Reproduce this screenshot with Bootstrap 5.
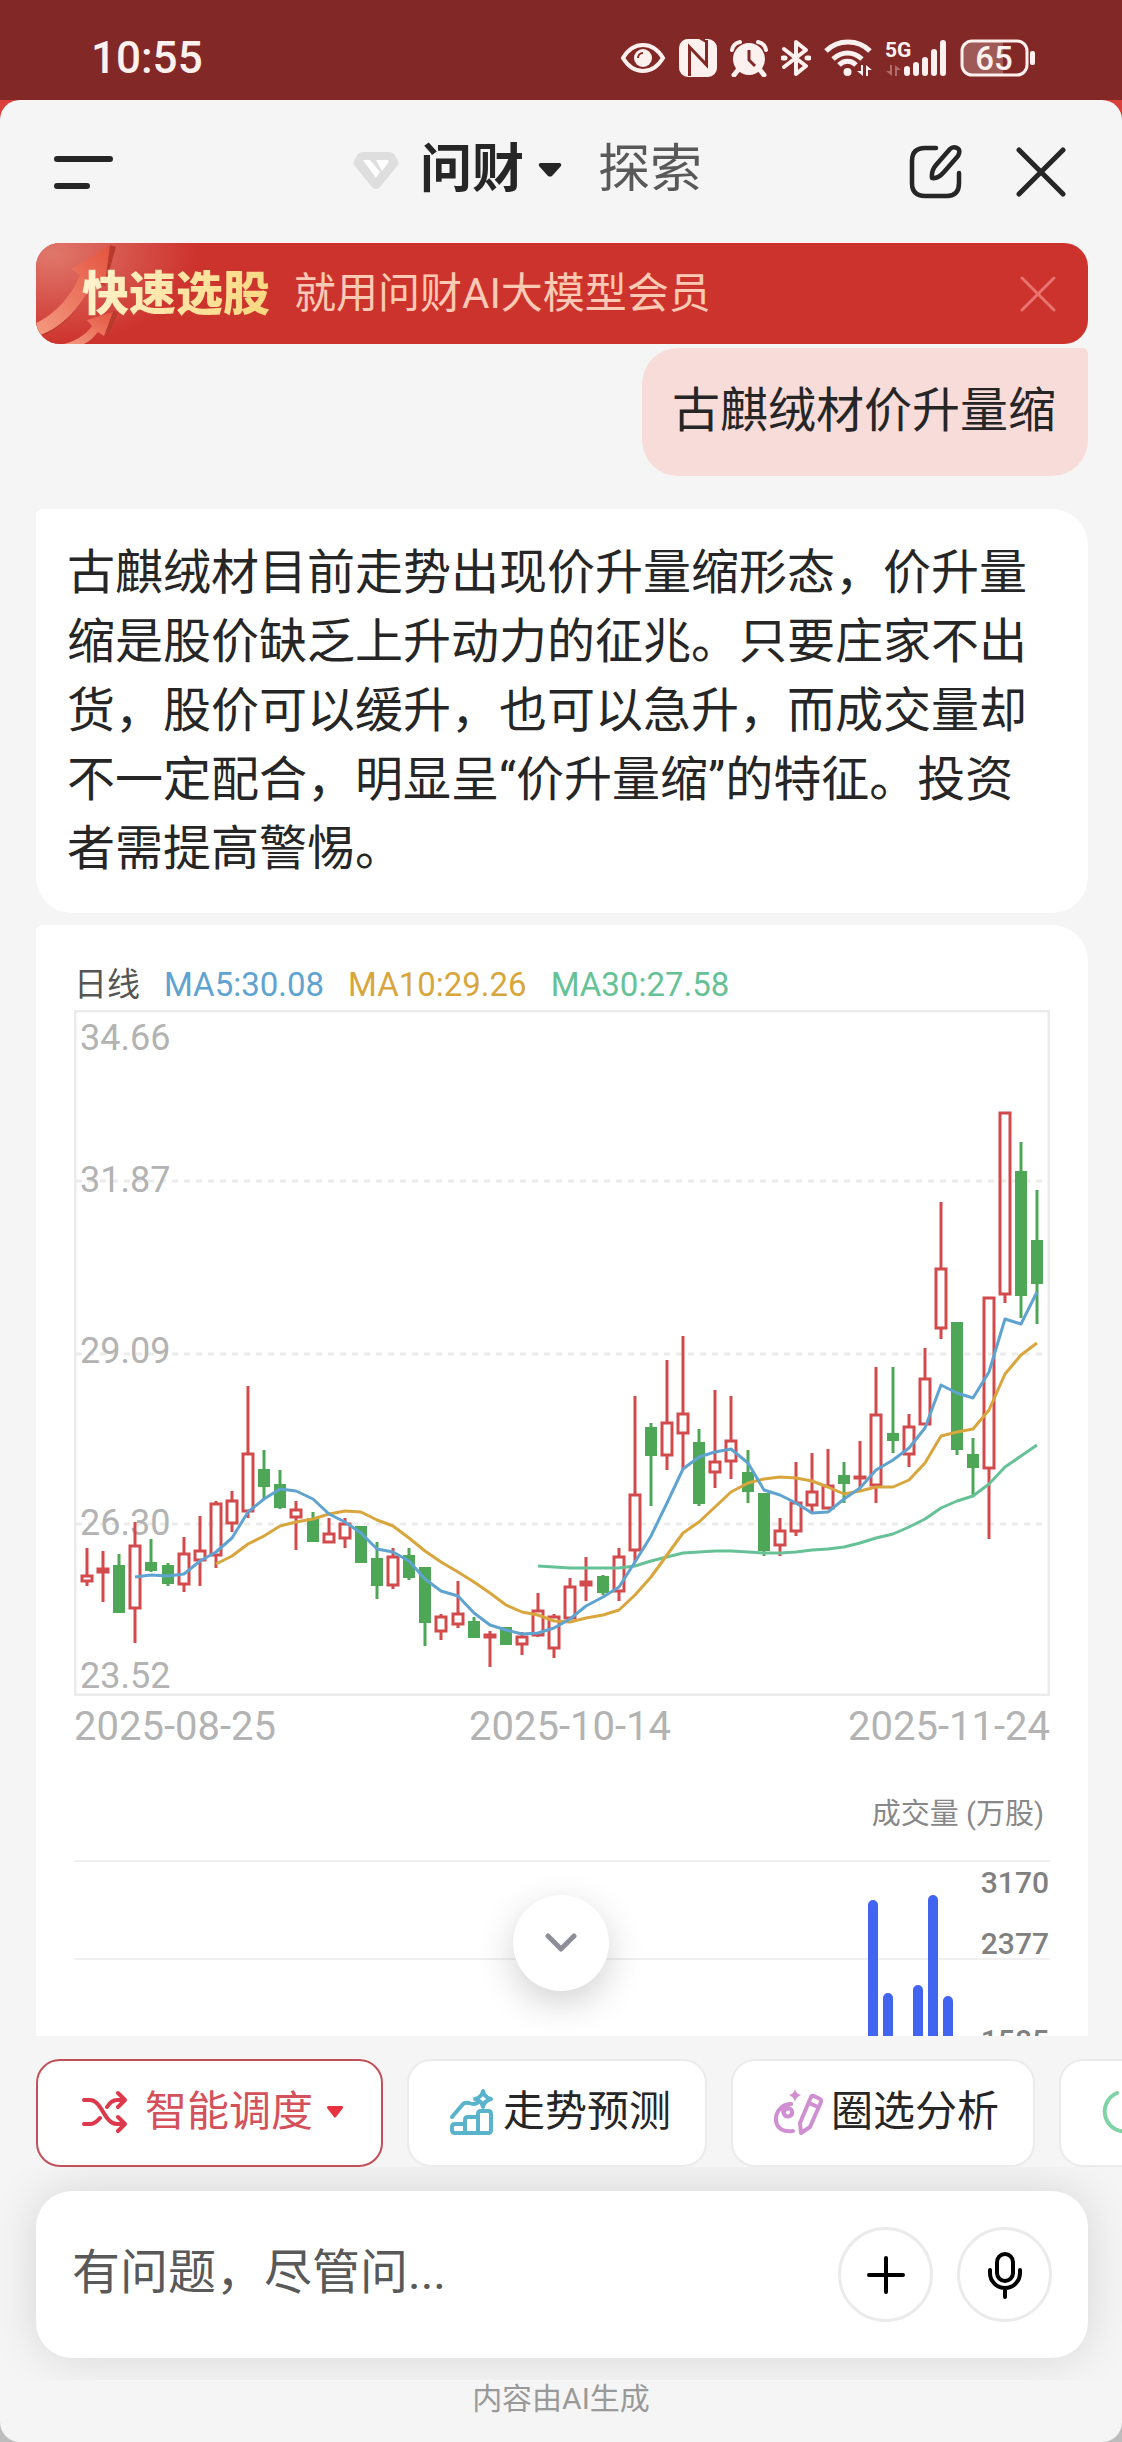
<!DOCTYPE html>
<html lang="zh-CN">
<head>
<meta charset="utf-8">
<meta name="viewport" content="width=device-width, initial-scale=1">
<title>问财</title>
<link href="https://cdn.jsdelivr.net/npm/bootstrap@5.3.0/dist/css/bootstrap.min.css" rel="stylesheet">
<style>
  body { background: #d9403c; font-family: Roboto, "Noto Sans CJK SC", sans-serif; color: #262626; }
  button, input { font-family: inherit; }
  svg { display: block; flex-shrink: 0; }
  .status-bar { height: 100px; padding: 16px 86px 0 91px; background: #822826; color: #fdf1f0; }
  .clock { font-size: 44px; line-height: 48px; font-weight: 500; }
  .status-icons { gap: 13px; }
  .shell { background: linear-gradient(#d9403c 50%, #bdbdbd 50%); min-height: 0; }
  .sheet { background: #f5f5f5; border-radius: 20px; overflow: hidden; }
  .topbar { height: 143px; padding: 0 54px; }
  .tab-bar { margin-left: 32px; padding-bottom: 4px; }
  .icon-btn { border: 0; background: none; padding: 0; color: #262626; }
  .brand-mark { margin-right: 20px; }
  .tab-main, .tab-other { font-size: 52px; line-height: 60px; border: 0; background: none; padding: 0; text-decoration: none; }
  .tab-main { font-weight: 700; color: #262626; gap: 14px; }
  .tab-other { color: #595959; margin-left: 36px; }
  .gutter { margin-left: 36px; margin-right: 34px; }
  .promo { height: 101px; border-radius: 24px; background: #cd332d; overflow: hidden; padding: 0 32px 0 46px; }
  .promo-art { left: 0; top: 0; }
  .promo-title { font-size: 47px; line-height: 56px; font-weight: 900; background: linear-gradient(110deg, #fff3cf, #fbd77c); -webkit-background-clip: text; background-clip: text; color: transparent; }
  .promo-text { font-size: 42px; line-height: 56px; color: #fcc9b4; }
  .say { font-size: 48px; line-height: 69px; }
  .ask { background: #f8dcd9; border-radius: 36px 6px 36px 36px; padding: 28px 32px 31px 30px; margin-top: 4px; }
  .reply { background: #fff; border-radius: 6px 36px 36px 36px; padding: 29px 32px 30px 31px; margin-top: 33px; }
  .chart-card { background: #fff; border-radius: 6px 36px 0 0; padding: 38px 38px 0; margin-top: 12px; }
  .legend-row { font-size: 33px; line-height: 44px; gap: 24px; color: #555; margin-bottom: 3px; }
  .ma5 { color: #5fa3d0; } .ma10 { color: #d8a63c; } .ma30 { color: #66c296; }
  .axis-dates { font-size: 40px; line-height: 48px; color: #b3b3b3; margin-top: 7px; }
  .vol-title { font-size: 29px; line-height: 40px; color: #888; margin: 43px 6px 26px 0; }
  .plot text { fill: #b3b3b3; font-size: 36px; }
  .vol text { fill: #808080; font-size: 30px; }
  .to-bottom { width: 96px; height: 96px; background: #fff; bottom: 45px; left: 50%; transform: translateX(-50%); box-shadow: 0 12px 36px rgba(0,0,0,.18); border: 0; padding: 0; }
  .chips { padding: 23px 0 0 36px; gap: 24px; overflow: hidden; }
  .chip { height: 108px; border-radius: 24px; border: 2px solid #ebebeb; background: #fff; font-size: 42px; line-height: 60px; color: #262626; padding: 0 34px 2px 40px; gap: 8px; flex: none; white-space: nowrap; }
  .chip-main { border-color: #c2505a; color: #d4505a; padding-left: 43px; padding-right: 38px; gap: 18px; }
  .chip-main span { margin-right: -4px; }
  .composer-zone { padding: 24px 34px 22px 36px; overflow: hidden; }
  .composer { height: 167px; border-radius: 36px; background: #fff; padding: 0 36px; gap: 24px; box-shadow: 0 0 48px rgba(0,0,0,.13); }
  .composer input { border: 0; outline: 0; background: none; font-size: 48px; line-height: 64px; min-width: 0; padding: 0; color: #262626; margin-bottom: 4px; }
  .composer input::placeholder { color: #595959; opacity: 1; }
  .round-btn { width: 95px; height: 95px; border: 3px solid #ebebeb; background: #fff; padding: 0; }
  .foot-note { font-size: 30px; line-height: 38px; color: #999; height: 62px; margin: 0; }
  .feed { flex: 1 1 0; min-height: 0; }
</style>
<script src="https://cdn.jsdelivr.net/npm/bootstrap@5.3.0/dist/js/bootstrap.bundle.min.js"></script>
</head>
<body>
<div class="d-flex flex-column vh-100">
  <div class="status-bar d-flex flex-shrink-0 align-items-center justify-content-between">
    <div class="clock">10:55</div>
    <div class="status-icons d-flex align-items-center" aria-hidden="true">
      <svg width="46" height="38" viewBox="0 0 46 38"><path d="M3 19C9 9 16 6 23 6s14 3 20 13c-6 10-13 13-20 13S9 29 3 19z" fill="none" stroke="#fdf1f0" stroke-width="4"/><circle cx="23" cy="19" r="9" fill="#fdf1f0"/><path d="M18 19a5 5 0 0 1 5-5" fill="none" stroke="#822826" stroke-width="2"/></svg>
      <svg width="38" height="38" viewBox="0 0 38 38"><path d="M10 0h10l7 4v19L17 14v24H9a9 9 0 0 1-9-9V9a9 9 0 0 1 10-9z" fill="#fdf1f0"/><path d="M26 0h3a9 9 0 0 1 9 9v20a9 9 0 0 1-9 9H17l-6-4V10l15 15z" fill="#fdf1f0"/><path d="M10.500 37V8l17 18V1" fill="none" stroke="#822826" stroke-width="3"/></svg>
      <svg width="38" height="38" viewBox="0 0 38 38"><circle cx="19" cy="20" r="16" fill="#fdf1f0"/><path d="M8 31l-4 5M30 31l4 5" stroke="#fdf1f0" stroke-width="5" stroke-linecap="round"/><path d="M2 11a10 10 0 0 1 8-8M36 11a10 10 0 0 0-8-8" fill="none" stroke="#fdf1f0" stroke-width="4" stroke-linecap="round"/><path d="M19 11v10l6 6" fill="none" stroke="#822826" stroke-width="3"/></svg>
      <svg width="30" height="38" viewBox="0 0 30 38"><path d="M3 10l22 17-10 8V3l10 8L3 28" fill="none" stroke="#fdf1f0" stroke-width="4" stroke-linejoin="round" stroke-linecap="round"/><path d="M2 19h2M26 19h2" stroke="#fdf1f0" stroke-width="5" stroke-linecap="round"/></svg>
      <svg width="48" height="38" viewBox="0 0 48 38"><g fill="none" stroke="#fdf1f0" stroke-width="5"><path d="M2 12c12-12 32-12 44 0"/><path d="M9 20c9-8 20-8 29 0"/><path d="M15 26c5-5 12-5 17 0"/></g><circle cx="23.500" cy="33" r="4" fill="#fdf1f0"/><path d="M39 26v11l-6-5h4v-6zM42 37V26l6 5h-4v6z" fill="#fdf1f0"/></svg>
      <svg width="62" height="38" viewBox="0 0 62 38"><text x="0" y="18" font-size="21" font-weight="700" fill="#fdf1f0">5G</text><path d="M7 26v11l-6-5h4v-6zM10 37V26l6 5h-4v6z" fill="#b06c6a"/><g stroke="#fdf1f0" stroke-width="6" stroke-linecap="round"><path d="M22 30v4M31 26v8M40 21v13M49 13v21M58 4v30"/></g></svg>
      <svg width="76" height="38" viewBox="0 0 76 38"><path d="M12 3h31v32H12a9 9 0 0 1-9-9V12a9 9 0 0 1 9-9z" fill="#9f5956"/><rect x="2" y="2" width="65" height="34" rx="10" fill="none" stroke="#fdf1f0" stroke-width="3"/><rect x="70" y="12" width="5" height="14" rx="2" fill="#fdf1f0"/><text x="34" y="31" text-anchor="middle" font-size="33" font-weight="500" fill="#fdf1f0">65</text></svg>
    </div>
  </div>

  <div class="shell flex-grow-1 d-flex">
  <div class="sheet d-flex flex-column w-100">
    <header class="topbar d-flex flex-shrink-0 align-items-center justify-content-between">
      <button class="icon-btn" aria-label="菜单"><svg width="60" height="36" viewBox="0 0 60 36"><path d="M3 5h53M3 32h30" stroke="#262626" stroke-width="6" stroke-linecap="round"/></svg></button>
      <nav class="tab-bar d-flex align-items-center">
        <svg class="brand-mark" width="48" height="40" viewBox="0 0 48 40" aria-hidden="true"><path d="M11 2h26q3 0 5 2l4 7q1 2 0 4L28 37q-4 4-8 0L2 15q-1-2 0-4l4-7q2-2 5-2z" fill="#dedede"/><path d="M11 10h7l10 12-4 6zM24 10h11q3 0 1 3l-6 8z" fill="#fff"/></svg>
        <button class="tab-main d-flex align-items-center">问财<svg width="24" height="14" viewBox="0 0 24 14"><path d="M2 0h20q2 1 1 3l-9 10q-2 1-4 0L1 3q-1-2 1-3z" fill="#262626"/></svg></button>
        <a class="tab-other" href="#">探索</a>
      </nav>
      <div class="d-flex align-items-center gap-5">
        <button class="icon-btn" aria-label="新对话"><svg width="56" height="56" viewBox="0 0 56 56"><g fill="none" stroke="#262626" stroke-width="4.500" stroke-linecap="round"><path d="M28 4H17Q4 4 4 17v22q0 13 13 13h22q12 0 12-13V29"/><path d="M42 5q3-3 7-1t1 8L36 28q-6 7-12 6-1-7 4-13z" stroke-linejoin="round"/></g></svg></button>
        <button class="icon-btn" aria-label="关闭"><svg width="56" height="56" viewBox="0 0 56 56"><path d="M7 6l44 44M51 6L7 50" stroke="#262626" stroke-width="5" stroke-linecap="round"/></svg></button>
      </div>
    </header>

    <section class="promo gutter flex-shrink-0 position-relative d-flex align-items-center">
      <svg class="promo-art position-absolute" width="160" height="101" viewBox="0 0 160 101" aria-hidden="true">
        <defs>
          <radialGradient id="glow" cx="0.1" cy="0.1" r="0.9"><stop offset="0" stop-color="#e0776b"/><stop offset="1" stop-color="#cd332d"/></radialGradient>
          <linearGradient id="arrow" x1="0" y1="1" x2="1" y2="0"><stop offset="0" stop-color="#f39a80"/><stop offset="1" stop-color="#e4533f"/></linearGradient>
        </defs>
        <rect width="160" height="101" fill="url(#glow)"/>
        <path d="M6 93C28 84 48 62 57 36l12 7 11-39-6-2-30 50z" fill="#b83a2c"/>
        <path d="M0 80C18 72 35 54 44 32l-9-6L74 2l-5 39-11-5C48 60 28 84 4 92L0 88z" fill="url(#arrow)"/>
        <path d="M40 101c12-4 22-11 29-18l3 11 10-24-4-2z" fill="#b83a2c"/>
        <path d="M28 101c14-4 22-10 28-18l-5-6 26-8-9 24-6-4c-5 6-8 9-14 12z" fill="url(#arrow)"/>
      </svg>
      <span class="promo-title position-relative">快速选股</span>
      <span class="promo-text ms-4">就用问财AI大模型会员</span>
      <button class="icon-btn ms-auto" aria-label="关闭横幅"><svg width="36" height="36" viewBox="0 0 36 36"><path d="M2 2l32 32M34 2L2 34" stroke="#e87370" stroke-width="3" stroke-linecap="round"/></svg></button>
    </section>

    <main class="feed position-relative overflow-hidden">
      <div class="gutter">
        <div class="d-flex justify-content-end"><div class="ask say">古麒绒材价升量缩</div></div>
        <div class="reply say">古麒绒材目前走势出现价升量缩形态，价升量缩是股价缺乏上升动力的征兆。只要庄家不出货，股价可以缓升，也可以急升，而成交量却不一定配合，明显呈“价升量缩”的特征。投资者需提高警惕。</div>
        <div class="chart-card">
          <div class="legend-row d-flex"><span>日线</span><span class="ma5">MA5:30.08</span><span class="ma10">MA10:29.26</span><span class="ma30">MA30:27.58</span></div>
          <svg class="plot w-100 h-auto" id="plot" viewBox="74 1010 976 686"></svg>
          <div class="axis-dates d-flex justify-content-between"><span>2025-08-25</span><span class="ms-3">2025-10-14</span><span>2025-11-24</span></div>
          <div class="vol-title text-end">成交量 (万股)</div>
          <svg class="vol w-100 h-auto" viewBox="0 0 976 400">
            <path d="M0 1h976M0 99h976M0 197h976" stroke="#f0f0f1" stroke-width="2"/>
            <g stroke="#4165f0" stroke-width="10" stroke-linecap="round"><path d="M799 45v355M814 138v262M844 130v270M859 40v360M874 141v259"/></g>
            <g text-anchor="end" font-weight="500"><text x="975" y="33">3170</text><text x="975" y="94">2377</text><text x="975" y="191">1585</text></g>
          </svg>
        </div>
      </div>
      <button class="to-bottom position-absolute rounded-circle d-flex align-items-center justify-content-center" aria-label="滚动到底部"><svg width="32" height="20" viewBox="0 0 32 20"><path d="M3 3l13 13L29 3" fill="none" stroke="#8e8e98" stroke-width="5" stroke-linecap="round" stroke-linejoin="round"/></svg></button>
    </main>

    <div class="chips d-flex flex-shrink-0">
      <button class="chip chip-main d-flex align-items-center"><svg width="46" height="44" viewBox="0 0 46 44"><g fill="none" stroke="#dc3a4c" stroke-width="4" stroke-linecap="round" stroke-linejoin="round"><path d="M3 10h6c12 0 14 24 27 24h8M3 34h6c5 0 7-3 10-6M26 17c3-5 6-7 10-7h8M37 3l7 7-7 7M37 27l7 7-7 7"/></g></svg><span>智能调度</span><svg width="16" height="12" viewBox="0 0 16 12"><path d="M1 0h14q2 1 1 2L9 11q-1 1-2 0L0 2q0-2 1-2z" fill="#e8323f"/></svg></button>
      <button class="chip d-flex align-items-center"><svg width="46" height="48" viewBox="0 0 46 48"><g fill="none" stroke="#58b3cb" stroke-width="4" stroke-linecap="round" stroke-linejoin="round"><path d="M3 29L14 16q2-2 6-1 5 2 8 0"/><path d="M16 45H6q-3 0-3-3v-3q0-3 3-3h10v-4q0-3 3-3h10v-3q0-3 3-3h7q3 0 3 3v16q0 3-3 3zM16 36v9M29 29v16"/><path d="M34 3q1 6 8 8-7 2-8 8-1-6-8-8 7-2 8-8z"/></g></svg><span>走势预测</span></button>
      <button class="chip d-flex align-items-center"><svg width="50" height="48" viewBox="0 0 50 48"><g fill="none" stroke="#cf8fd0" stroke-width="4" stroke-linecap="round" stroke-linejoin="round"><path d="M18 16C8 16 2 25 3 33s8 11 17 10"/><path d="M18 16c-7 1-9 6-7 10s9 3 8-3c-1-3-5-3-7-1"/><path d="M27 35L38 9q1-2 3-1l6 3q2 1 1 3L37 39l-9 6zM36 15l9 4"/></g><path d="M22 1q1 5 6 6-5 2-6 7-1-5-6-7 5-1 6-6z" fill="#cf8fd0"/></svg><span>圈选分析</span></button>
      <button class="chip d-flex align-items-center" aria-label="更多"><svg width="46" height="46" viewBox="0 0 46 46"><path d="M16 4a20 20 0 1 0 27 13" fill="none" stroke="#7fd3a5" stroke-width="4" stroke-linecap="round"/></svg></button>
    </div>

    <div class="composer-zone flex-shrink-0">
      <div class="composer d-flex align-items-center">
        <input class="flex-grow-1" type="text" placeholder="有问题，尽管问..." aria-label="提问">
        <button class="round-btn rounded-circle d-flex align-items-center justify-content-center" aria-label="添加"><svg width="38" height="38" viewBox="0 0 38 38"><path d="M19 2v34M2 19h34" stroke="#000" stroke-width="4" stroke-linecap="round"/></svg></button>
        <button class="round-btn rounded-circle d-flex align-items-center justify-content-center" aria-label="语音"><svg width="36" height="48" viewBox="0 0 36 48"><g fill="none" stroke="#000" stroke-width="4" stroke-linecap="round"><rect x="10" y="3" width="16" height="27" rx="8"/><path d="M3 19v3a15 15 0 0 0 30 0v-3M18 38v8"/></g></svg></button>
      </div>
    </div>
    <p class="foot-note flex-shrink-0 text-center">内容由AI生成</p>
  </div>
  </div>
</div>
<script>
// Candles: [high, body top, body bottom, low, rising] in plot units.
const candles = [
[1548,1575,1582,1586,1],[1551,1568,1573,1602,1],[1554,1565,1613,1613,0],[1522,1545,1609,1643,1],[1539,1562,1571,1572,0],[1563,1565,1584,1586,0],
[1537,1553,1585,1592,1],[1516,1550,1561,1586,1],[1501,1503,1556,1568,1],[1491,1500,1524,1532,1],[1386,1453,1512,1518,1],[1450,1469,1487,1499,0],
[1470,1484,1508,1509,0],[1501,1509,1518,1550,1],[1512,1518,1542,1542,0],[1518,1533,1543,1543,1],[1518,1523,1539,1548,1],[1526,1526,1563,1563,0],
[1542,1558,1586,1599,0],[1548,1556,1586,1589,1],[1548,1555,1578,1580,0],[1567,1567,1623,1646,0],[1614,1616,1632,1640,1],[1581,1613,1625,1628,1],
[1617,1621,1638,1638,0],[1631,1634,1638,1667,1],[1627,1627,1645,1645,0],[1632,1636,1645,1655,1],[1593,1610,1636,1637,1],[1614,1616,1649,1658,1],
[1578,1586,1619,1619,1],[1557,1581,1586,1601,1],[1575,1576,1593,1595,0],[1548,1556,1592,1601,1],[1396,1494,1551,1562,1],[1423,1427,1456,1506,0],
[1360,1422,1456,1470,1],[1336,1413,1434,1469,1],[1429,1442,1504,1506,0],[1390,1461,1473,1488,1],[1396,1440,1462,1479,1],[1450,1472,1492,1503,0],
[1493,1493,1551,1556,0],[1518,1530,1546,1556,1],[1462,1502,1532,1536,1],[1453,1491,1506,1514,1],[1449,1485,1509,1509,1],[1462,1475,1484,1503,0],
[1441,1476,1477,1488,1],[1367,1414,1486,1503,1],[1367,1433,1441,1453,0],[1414,1426,1455,1467,1],[1348,1378,1425,1425,1],[1202,1268,1329,1339,1],
[1322,1322,1450,1455,0],[1438,1454,1468,1497,0],[1297,1297,1469,1539,1],[1112,1112,1295,1303,1],[1142,1171,1296,1318,0],[1190,1240,1284,1324,0]];
// Moving averages: first candle index, colour, values.
const averages = [
[28,'#66c296',[1566,1567,1568,1568,1568,1568,1566,1561,1557,1553,1552,1551,1551,1552,1553,1553,1552,1550,1549,1547,1543,1538,1534,1527,1519,1508,1501,1496,1484,1467,1456,1445]],
[8,'#d8a63c',[1564,1556,1544,1536,1526,1522,1519,1514,1511,1512,1520,1526,1538,1551,1562,1572,1582,1593,1605,1612,1615,1621,1622,1618,1615,1610,1595,1577,1555,1533,1522,1507,1492,1483,1479,1477,1478,1481,1487,1494,1491,1487,1487,1480,1463,1436,1432,1429,1410,1374,1355,1343]],
[3,'#5fa3d0',[1577,1575,1576,1574,1561,1552,1538,1512,1499,1489,1491,1499,1514,1522,1533,1549,1552,1561,1579,1591,1596,1613,1625,1630,1634,1633,1628,1619,1606,1597,1587,1562,1536,1503,1469,1457,1452,1449,1463,1490,1495,1503,1513,1512,1499,1488,1470,1460,1448,1428,1385,1393,1398,1372,1319,1324,1292]]];
const cx = i => Math.round(87 + 16.11 * i);
let out = '<rect x="75" y="1011" width="974" height="684" fill="none" stroke="#ebebeb" stroke-width="3"/>';
for (const y of [1181, 1354, 1524]) out += `<path d="M76 ${y}H1048" stroke="#ebebeb" stroke-width="3" stroke-dasharray="6 6"/>`;
[[1050,'34.66'],[1192,'31.87'],[1363,'29.09'],[1535,'26.30'],[1688,'23.52']].forEach(([y, t]) => out += `<text x="80" y="${y}">${t}</text>`);
candles.forEach(([h, t, b, l, up], i) => {
  const x = cx(i);
  out += up
    ? `<path d="M${x} ${h}V${t}M${x} ${b}V${l}" stroke="#d24a4c" stroke-width="3"/><rect x="${x - 5}" y="${t + 1}" width="10" height="${Math.max(b - t - 2, 1)}" fill="none" stroke="#d24a4c" stroke-width="3"/>`
    : `<path d="M${x} ${h}V${l}" stroke="#4ea757" stroke-width="3"/><rect x="${x - 6}" y="${t}" width="12" height="${b - t}" fill="#4ea757"/>`;
});
for (const [s, c, v] of averages) out += `<polyline points="${v.map((y, i) => cx(s + i) + ',' + y).join(' ')}" fill="none" stroke="${c}" stroke-width="3" stroke-linejoin="round"/>`;
document.getElementById('plot').innerHTML = out;
</script>
</body>
</html>
